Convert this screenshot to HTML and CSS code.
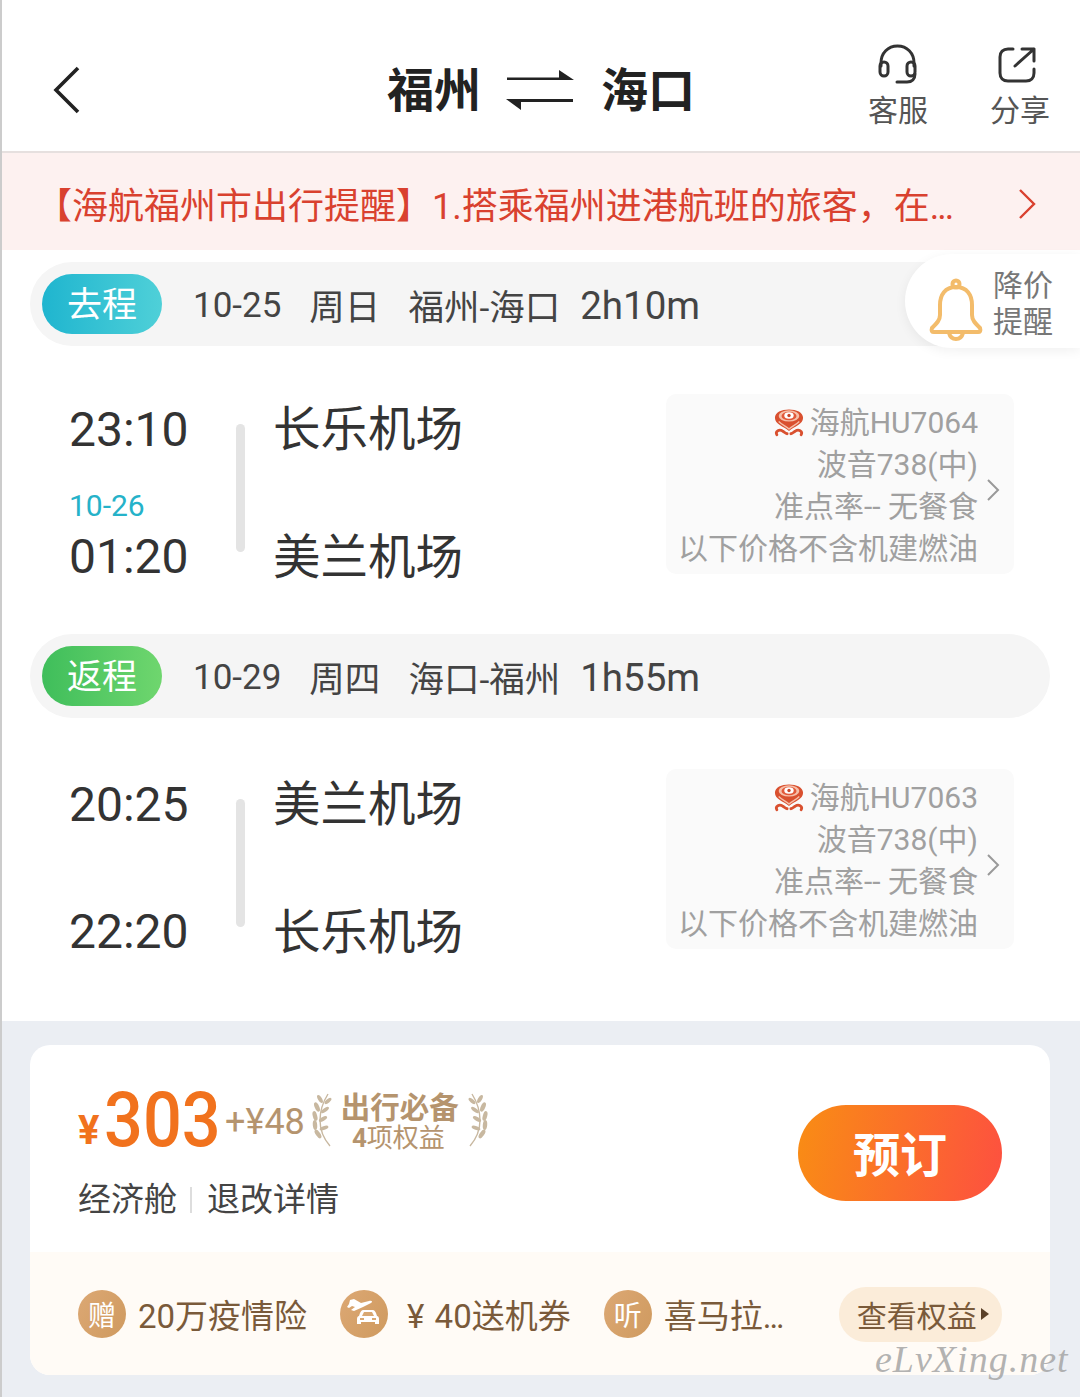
FILE: index.html
```html
<!DOCTYPE html>
<html lang="zh-CN">
<head>
  <meta charset="UTF-8" />
  <meta name="viewport" content="width=device-width, initial-scale=1.0"/>
  <title>福州 海口</title>
  <link rel="stylesheet" href="styles.css">
</head>
<body>

<svg width="0" height="0" class="defs">
  <symbol id="hna" viewBox="0 0 32 30">
    <path d="M16 24C10 19 1 17 1 10 1 4 8 1 16 1s15 3 15 9c0 7-9 9-15 14z" fill="#d9502f"/>
    <ellipse cx="16" cy="8" rx="11" ry="6" fill="#f6bfa9"/>
    <ellipse cx="16" cy="8" rx="8" ry="4.6" fill="#e2593a"/>
    <ellipse cx="16" cy="7.5" rx="5" ry="3.4" fill="#fff"/>
    <circle cx="16" cy="7.5" r="1.8" fill="#c9472c"/>
    <path d="M5 14c4 4 8 5 11 8 3-3 7-4 11-8" fill="none" stroke="#f6bfa9" stroke-width="1.4"/>
    <path d="M3 28c-2-4 3-6 6-4 2 1 3 3 5 3M29 28c2-4-3-6-6-4-2 1-3 3-5 3" fill="none" stroke="#d9502f" stroke-width="3" stroke-linecap="round"/>
  </symbol>
  <symbol id="laurel" viewBox="0 0 24 56">
    <path d="M19 2C9 18 7 38 21 54" fill="none" stroke="currentColor" stroke-width="1.4"/>
    <g fill="currentColor">
      <ellipse cx="11" cy="7" rx="2" ry="4.5" transform="rotate(-30 11 7)"/>
      <ellipse cx="8" cy="15" rx="2.2" ry="5" transform="rotate(-25 8 15)"/>
      <ellipse cx="6" cy="24" rx="2.2" ry="5" transform="rotate(-15 6 24)"/>
      <ellipse cx="6" cy="33" rx="2.2" ry="5" transform="rotate(-5 6 33)"/>
      <ellipse cx="9" cy="42" rx="2.2" ry="5" transform="rotate(-35 9 42)"/>
      <ellipse cx="19" cy="9" rx="1.8" ry="4.2" transform="rotate(50 19 9)"/>
      <ellipse cx="16" cy="18" rx="1.9" ry="4.6" transform="rotate(55 16 18)"/>
      <ellipse cx="14" cy="27" rx="1.9" ry="4.6" transform="rotate(60 14 27)"/>
      <ellipse cx="15" cy="36" rx="1.9" ry="4.6" transform="rotate(70 15 36)"/>
    </g>
  </symbol>
</svg>

<header class="topbar">
  <svg class="back" width="28" height="48" viewBox="0 0 28 48"><path d="M25 2 3 24l22 22" fill="none" stroke="#222" stroke-width="3.6"/></svg>
  <div class="route">
    <span>福州</span>
    <svg class="swap" width="68" height="40" viewBox="0 0 68 40" fill="#222"><path d="M1 7.5h52V0l15 10H1zM67 29v3H15v8L0 29z"/></svg>
    <span>海口</span>
  </div>
  <div class="top-actions">
    <div class="action">
      <svg width="40" height="42" viewBox="0 0 40 42" fill="none" stroke="#333" stroke-width="3" stroke-linecap="round"><path d="M3 22V19C3 9 10 2 19.500 2S36 9 36 19v3"/><rect x="2" y="18" width="8" height="14" rx="4"/><rect x="29" y="18" width="8" height="14" rx="4"/><path d="M37 30c0 5-3 8-8 8H19"/></svg>
      <span>客服</span>
    </div>
    <div class="action">
      <svg class="share" width="38" height="38" viewBox="0 0 38 38" fill="none" stroke="#333" stroke-width="3" stroke-linecap="round" stroke-linejoin="round"><path d="M15 3h-5C5 3 2 6 2 11v16c0 5 3 8 8 8h18c5 0 8-3 8-8v-4"/><path d="M17 20 36 3M24 3h12v12"/></svg>
      <span>分享</span>
    </div>
  </div>
</header>

<div class="notice">
  <p>【海航福州市出行提醒】1.搭乘福州进港航班的旅客，在<span class="dots">...</span></p>
  <svg class="notice-arrow" width="18" height="32" viewBox="0 0 18 32"><path d="M2 2l14 14L2 30" fill="none" stroke="#d9412f" stroke-width="2.4"/></svg>
</div>

<main class="trips">
  <div class="alert">
    <svg class="bell" width="54" height="64" viewBox="0 0 54 64" fill="none" stroke="#f3bc6b" stroke-width="4" stroke-linejoin="round"><path d="M27 9c-11 0-16 8-16 18v10c0 5-3 8-8 13-1 3 0 4 2 4h44c2 0 3-1 2-4-5-5-8-8-8-13V27C43 17 38 9 27 9z"/><circle cx="27" cy="6" r="3.500"/><path d="M20 55c1 4 4 6 7 6s6-2 7-6"/></svg>
    <span class="alert-text">降价<br>提醒</span>
  </div>

  <div class="leg-bar">
    <span class="leg-tag tag-go">去程</span>
    <span class="leg-date">10-25</span><span>周日</span><span>福州-海口</span><span class="leg-time">2h10m</span>
  </div>
  <section class="flight">
    <div class="times">
      <div class="time">23:10</div>
      <div class="arrive"><small>10-26</small><div class="time">01:20</div></div>
    </div>
    <i class="line"></i>
    <div class="airports"><div>长乐机场</div><div>美兰机场</div></div>
    <div class="info">
      <div class="info-text">
        <div><svg class="logo"><use href="#hna"/></svg> 海航HU7064</div>
        <div>波音738(中)</div>
        <div>准点率-- 无餐食</div>
        <div>以下价格不含机建燃油</div>
      </div>
      <svg class="info-arrow" width="14" height="24" viewBox="0 0 14 24"><path d="M2 2l10 10L2 22" fill="none" stroke="#999" stroke-width="2"/></svg>
    </div>
  </section>

  <div class="leg-bar">
    <span class="leg-tag tag-back">返程</span>
    <span class="leg-date">10-29</span><span>周四</span><span>海口-福州</span><span class="leg-time">1h55m</span>
  </div>
  <section class="flight flight-back">
    <div class="times">
      <div class="time">20:25</div>
      <div class="arrive"><div class="time">22:20</div></div>
    </div>
    <i class="line"></i>
    <div class="airports"><div>美兰机场</div><div>长乐机场</div></div>
    <div class="info">
      <div class="info-text">
        <div><svg class="logo"><use href="#hna"/></svg> 海航HU7063</div>
        <div>波音738(中)</div>
        <div>准点率-- 无餐食</div>
        <div>以下价格不含机建燃油</div>
      </div>
      <svg class="info-arrow" width="14" height="24" viewBox="0 0 14 24"><path d="M2 2l10 10L2 22" fill="none" stroke="#999" stroke-width="2"/></svg>
    </div>
  </section>
</main>

<section class="bottom">
  <div class="card">
    <div class="price-row">
      <div class="price-left">
        <div class="price">
          <b class="yen">¥</b><b class="amount">303</b><span class="tax">+¥48</span>
          <div class="must">
            <svg class="laurel" width="24" height="56"><use href="#laurel"/></svg>
            <div class="must-text"><b>出行必备</b><span><b>4</b>项权益</span></div>
            <svg class="laurel flip" width="24" height="56"><use href="#laurel"/></svg>
          </div>
        </div>
        <div class="cabin"><span>经济舱</span><i></i><span>退改详情</span></div>
      </div>
      <button class="book">预订</button>
    </div>
    <div class="perks">
      <div class="perk"><span class="coin">赠</span><span>20万疫情险</span></div>
      <div class="perk"><span class="coin">
        <svg width="48" height="48" viewBox="0 0 48 48"><path d="M10 10l4-1 7 4 8-2c3-1 4 1 2 2l-8 4-9 4-3-1 4-3-3-1-3 2-2-1 2-3z" fill="#fff"/><path d="M23 20h10c1 0 2 1 3 3l1 3c1 0 2 1 2 3v5h-4v-2H21v2h-4v-5c0-2 1-3 2-3l1-3c1-2 2-3 3-3z" fill="#fff"/><path d="M24 22h8l2 4H22zM20 28h4v2h-4zM32 28h4v2h-4z" fill="#d9a872"/></svg>
      </span><span class="ticket">¥ 40送机券</span></div>
      <div class="perk"><span class="coin">听</span><span>喜马拉<span class="dots">...</span></span></div>
      <div class="see">查看权益<i></i></div>
    </div>
  </div>
</section>

<div class="mark">eLvXing.net</div>

</body>
</html>
```

FILE: styles.css
```css
* {
  box-sizing: border-box;
}

html, body {
  margin: 0;
  padding: 0;
}

body {
  position: relative;
  width: 1080px;
  height: 1397px;
  overflow: hidden;
  background: #fff;
  border-left: 2px solid #ccc;
  font-family: Roboto, "Noto Sans CJK SC", sans-serif;
  color: #333;
}

.defs {
  position: absolute;
}

.topbar {
  height: 153px;
  position: relative;
  border-bottom: 2px solid #e6e0df;
}

.back {
  position: absolute;
  left: 51px;
  top: 66px;
}

.route {
  position: absolute;
  left: 385px;
  top: 56px;
  height: 60px;
  display: flex;
  align-items: center;
  gap: 25px;
  font-size: 47px;
  font-weight: 700;
  color: #222;
}

.swap {
  margin: 8px 2px 0 0;
}

.top-actions {
  position: absolute;
  left: 866px;
  top: 44px;
  display: flex;
  gap: 62px;
}

.action {
  width: 60px;
  display: flex;
  flex-direction: column;
  align-items: center;
  gap: 4px;
  font-size: 30px;
  line-height: 42px;
  color: #555;
  white-space: nowrap;
}

.share {
  margin: 2px 6px 2px 0;
}

.notice {
  height: 97px;
  background: #fdf1f0;
  display: flex;
  align-items: center;
  justify-content: space-between;
  padding: 3px 44px 0 34px;
  color: #d9412f;
}

.notice p {
  margin: 0;
  font-size: 36px;
  white-space: nowrap;
}

.notice-arrow {
  margin-top: 2px;
}

.dots {
  letter-spacing: -2px;
}

.trips {
  position: relative;
  height: 771px;
  padding: 12px 28px 0;
}

.alert {
  position: absolute;
  right: 0;
  top: 4px;
  width: 175px;
  height: 94px;
  background: #fff;
  border-radius: 47px 0 0 47px;
  box-shadow: 0 3px 12px rgba(0,0,0,0.06);
  display: flex;
  align-items: center;
  gap: 10px;
  padding-left: 24px;
  font-size: 30px;
  line-height: 36px;
  color: #777;
}

.bell {
  margin-top: 18px;
}

.alert-text {
  margin-top: 5px;
}

.leg-bar {
  height: 84px;
  width: 1020px;
  background: #f5f5f5;
  border-radius: 42px;
  display: flex;
  align-items: center;
  gap: 28px;
  padding-left: 12px;
  font-size: 35.5px;
  color: #444;
  white-space: nowrap;
}

.leg-tag {
  width: 120px;
  height: 60px;
  border-radius: 30px;
  color: #fff;
  font-size: 35px;
  text-align: center;
  line-height: 64px;
  margin-right: 3px;
}

.tag-go {
  background: linear-gradient(90deg, #1fb5cf, #4fd0d8);
}

.tag-back {
  background: linear-gradient(90deg, #3fbe5b, #6fd66e);
}

.leg-date {
  font-size: 35px;
  margin-top: 2px;
}

.leg-time {
  font-size: 38.5px;
  margin: 2px 0 0 -8px;
}

.flight {
  height: 288px;
  display: flex;
  padding-top: 48px;
}

.flight-back {
  padding-top: 51px;
}

.times {
  width: 167px;
  margin: 1px 0 0 39px;
  height: 197px;
  display: flex;
  flex-direction: column;
  justify-content: space-between;
}

.time {
  font-size: 48px;
  line-height: 70px;
  color: #333;
}

.arrive small {
  display: block;
  font-size: 30px;
  line-height: 36px;
  color: #25b2c9;
  margin-bottom: -2px;
}

.line {
  width: 9px;
  height: 128px;
  margin-top: 30px;
  background: #e4e4e4;
  border-radius: 5px;
}

.airports {
  margin: 1px 0 0 28px;
  width: 393px;
  height: 198px;
  display: flex;
  flex-direction: column;
  justify-content: space-between;
  font-size: 47.5px;
  line-height: 70px;
  color: #333;
}

.info {
  position: relative;
  width: 348px;
  height: 180px;
  background: #fafafa;
  border-radius: 10px;
  padding: 8px 36px 0 0;
  text-align: right;
  font-size: 30px;
  line-height: 42px;
  color: #a0a0a0;
  white-space: nowrap;
}

.logo {
  width: 30px;
  height: 29px;
  margin-right: -2px;
  vertical-align: -4px;
}

.info-arrow {
  position: absolute;
  right: 14px;
  top: 84px;
}

.bottom {
  height: 376px;
  background: #ebeef3;
  padding: 24px 28px 0;
}

.card {
  width: 1020px;
  height: 330px;
  background: #fff;
  border-radius: 20px;
  overflow: hidden;
}

.price-row {
  height: 207px;
  display: flex;
  justify-content: space-between;
  padding: 34px 48px 0 48px;
}

.price {
  height: 82px;
  display: flex;
  align-items: flex-end;
  color: #f1721d;
}

.yen {
  font-size: 40px;
  line-height: 52px;
  margin-bottom: 4px;
}

.amount {
  display: inline-block;
  font-size: 76px;
  line-height: 82px;
  font-weight: 500;
  margin: 0 -12px 0 5px;
  transform: scaleX(0.9);
  transform-origin: left;
}

.tax {
  font-size: 36px;
  line-height: 48px;
  color: #b5946e;
  margin: 0 0 15px 3px;
}

.must {
  display: flex;
  align-items: center;
  align-self: center;
  margin-left: 4px;
  color: #b5946e;
}

.laurel {
  color: #c8b8a0;
}

.flip {
  transform: scaleX(-1);
}

.must-text {
  width: 130px;
  margin: 4px 2px 0 2px;
  display: flex;
  flex-direction: column;
  align-items: center;
  white-space: nowrap;
  font-size: 29.5px;
  line-height: 32px;
}

.must-text span {
  font-size: 26px;
  line-height: 28px;
  margin-right: 3px;
}

.cabin {
  display: flex;
  align-items: center;
  margin-top: 15px;
  font-size: 33px;
  line-height: 48px;
  color: #444;
}

.cabin i {
  width: 2px;
  height: 26px;
  margin: 0 15px 0 13px;
  background: #ddd;
}

.book {
  width: 204px;
  height: 96px;
  margin-top: 26px;
  padding-bottom: 5px;
  border: none;
  border-radius: 48px;
  background: linear-gradient(100deg, #f98d14, #fd5040);
  color: #fff;
  font-family: inherit;
  font-size: 47px;
  font-weight: 700;
}

.perks {
  height: 123px;
  background: #fffbf6;
  display: flex;
  align-items: center;
  padding: 0 48px;
  font-size: 33px;
  color: #7a5a3a;
  white-space: nowrap;
}

.perk {
  display: flex;
  align-items: center;
  gap: 12px;
  margin-right: 33px;
}

.perk + .perk + .perk {
  margin-right: 56px;
}

.ticket {
  margin-left: 7px;
  word-spacing: 2px;
}

.coin {
  width: 48px;
  height: 48px;
  border-radius: 50%;
  background: linear-gradient(120deg, #dca874, #cf9a5f);
  color: #fff;
  font-size: 28px;
  display: flex;
  align-items: center;
  justify-content: center;
}

.see {
  width: 165px;
  height: 55px;
  margin-top: 1px;
  border-radius: 27px;
  background: #fbecd9;
  display: flex;
  align-items: center;
  padding-left: 18px;
  font-size: 30px;
  color: #7a5a3a;
}

.see i {
  width: 0;
  height: 0;
  border-left: 8px solid #5a4028;
  border-top: 6px solid transparent;
  border-bottom: 6px solid transparent;
  margin-left: 4px;
}

.mark {
  position: absolute;
  left: 873px;
  top: 1337px;
  font-family: "Liberation Serif", serif;
  font-style: italic;
  font-size: 38px;
  letter-spacing: 1px;
  color: rgba(165,165,165,0.85);
}
```
